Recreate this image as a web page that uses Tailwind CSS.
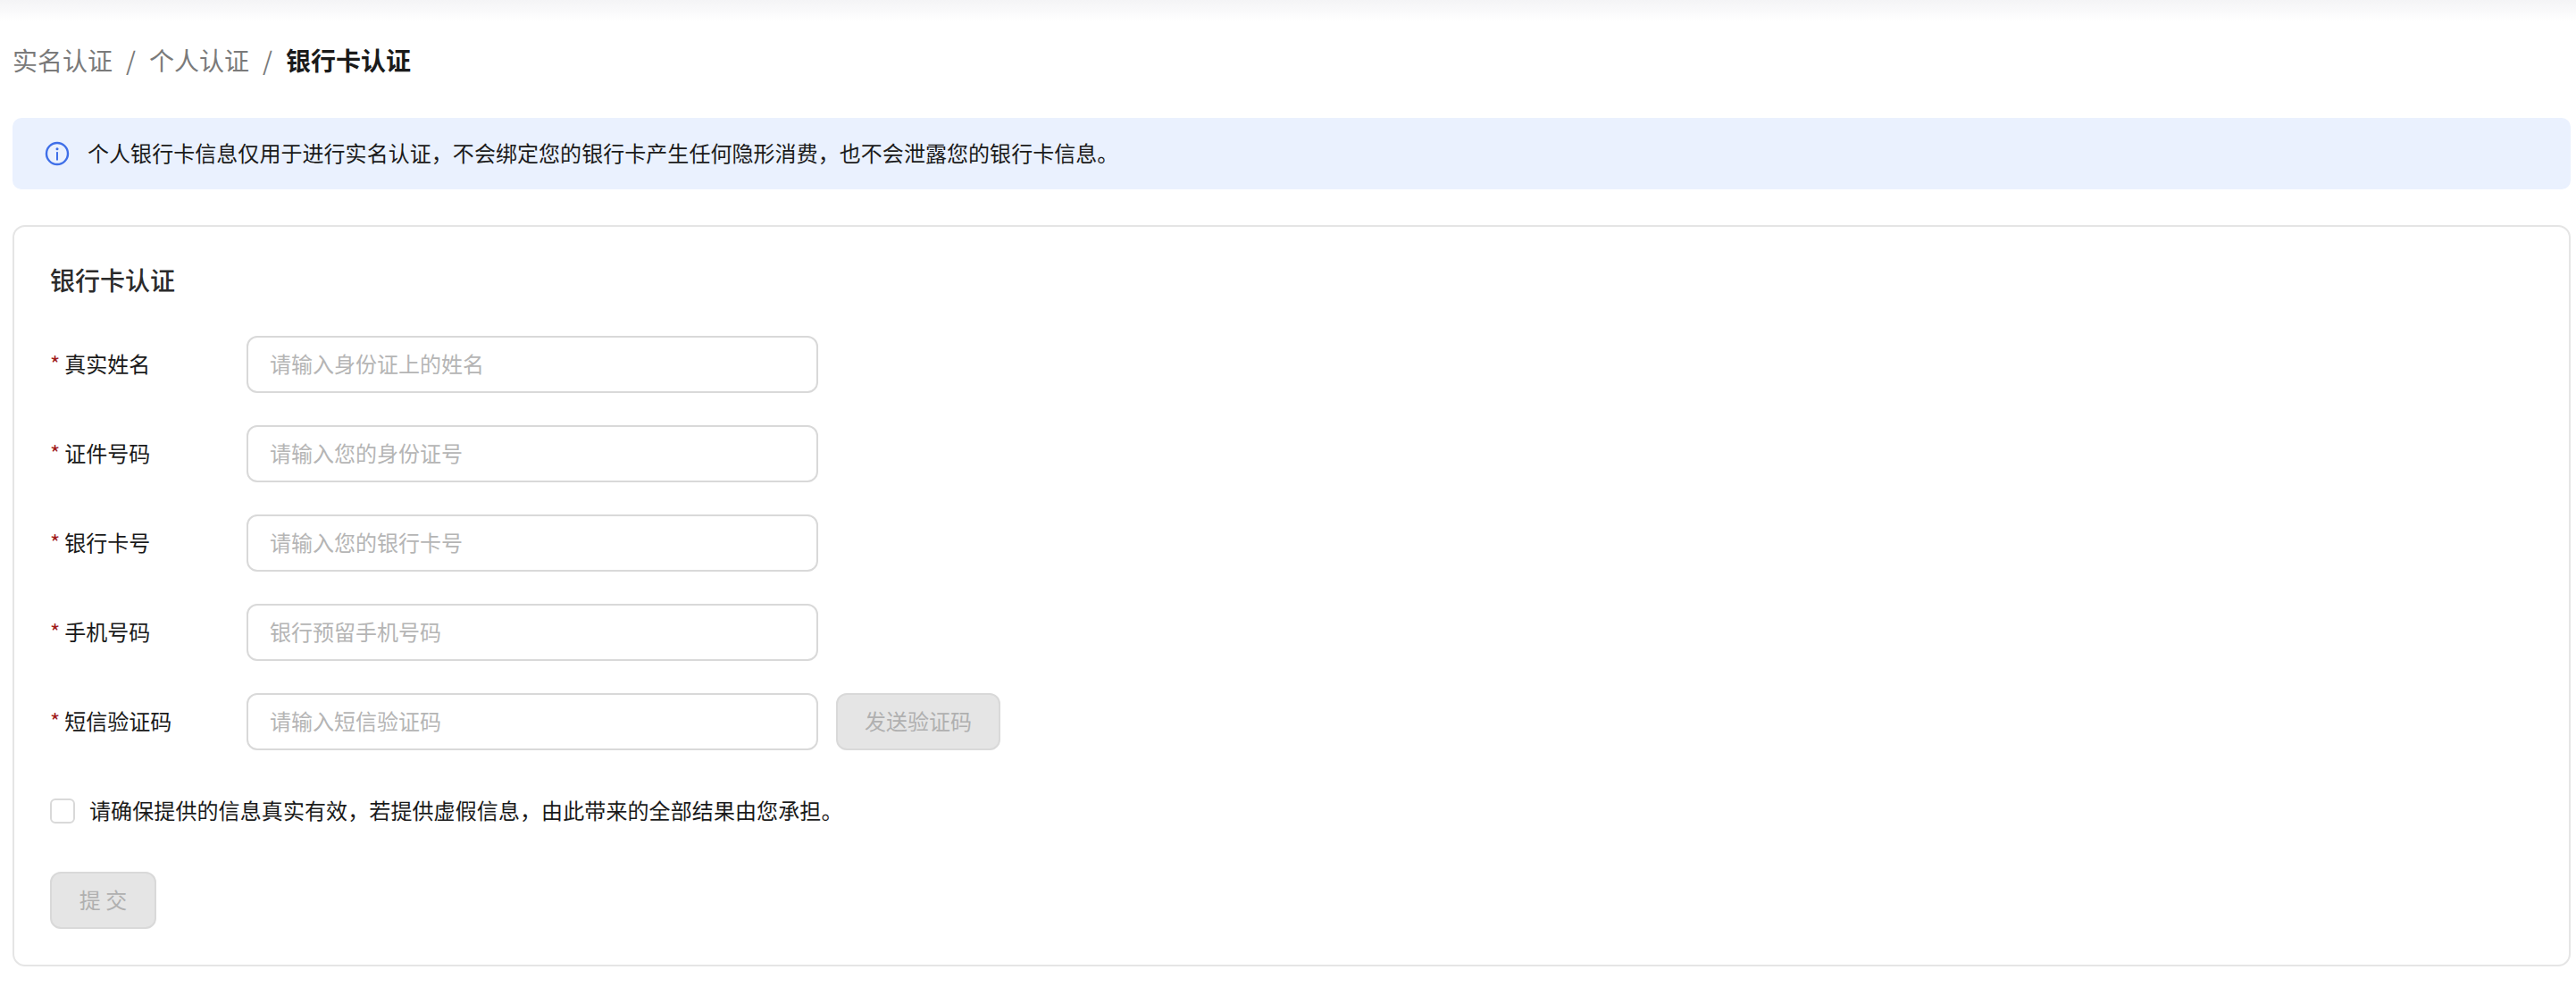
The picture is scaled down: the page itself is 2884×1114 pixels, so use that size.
<!DOCTYPE html>
<html lang="zh-CN">

<head>
    <meta charset="UTF-8">
    <meta name="viewport" content="width=device-width, initial-scale=1.0">
    <title>银行卡认证</title>
    <script src="https://cdn.jsdelivr.net/npm/@tailwindcss/browser@4"></script>
</head>

<body class="bg-white min-h-screen font-['Noto_Sans_CJK_SC',sans-serif] text-[24px] text-[#1a1a1a]">
    <!-- top bar shadow -->
    <div class="h-[24px] bg-gradient-to-b from-[#f4f4f6] to-white"></div>

    <div class="pl-[14px] pr-[6px]">
        <nav class="flex items-center h-[40px] mt-[24px] pb-[3px] text-[28px] leading-[40px]">
            <span class="text-[#7a7a7a]">实名认证</span>
            <span class="text-[#7a7a7a] mx-[15px]">/</span>
            <span class="text-[#7a7a7a]">个人认证</span>
            <span class="text-[#7a7a7a] mx-[15px]">/</span>
            <span class="font-semibold text-[#1a1a1a]">银行卡认证</span>
        </nav>

        <div class="flex items-center h-[80px] mt-[44px] pl-[36px] gap-[20px] rounded-[10px] bg-[#eaf1fe]">
            <svg class="w-[28px] h-[28px] shrink-0" viewBox="0 0 28 28" fill="none">
                <circle cx="14" cy="14" r="12" stroke="#3f6fe8" stroke-width="2.4" />
                <circle cx="14" cy="8.8" r="1.5" fill="#3f6fe8" />
                <rect x="13" y="12" width="2" height="9.5" rx="0.6" fill="#3f6fe8" />
            </svg>
            <p class="pb-[2px] tracking-[0.05px]">个人银行卡信息仅用于进行实名认证，不会绑定您的银行卡产生任何隐形消费，也不会泄露您的银行卡信息。</p>
        </div>

        <div class="mt-[40px] border-2 border-[#e5e5e5] rounded-[14px] pl-[40px] pt-[39px] pb-[40px]">
            <h2 class="text-[28px] leading-[40px] font-medium text-[#2b2b2b] mb-[43px]">银行卡认证</h2>

            <div class="flex flex-col gap-[36px]">
                <div class="flex items-center">
                    <label class="w-[220px] pb-[2px]"><span class="text-[#a11a1a] mr-[5px]">*</span>真实姓名</label>
                    <input class="w-[640px] h-[64px] px-[24px] pb-[3px] border-2 border-[#d9d9d9] rounded-[12px] placeholder:text-[#b5b5b5]" placeholder="请输入身份证上的姓名">
                </div>
                <div class="flex items-center">
                    <label class="w-[220px] pb-[2px]"><span class="text-[#a11a1a] mr-[5px]">*</span>证件号码</label>
                    <input class="w-[640px] h-[64px] px-[24px] pb-[3px] border-2 border-[#d9d9d9] rounded-[12px] placeholder:text-[#b5b5b5]" placeholder="请输入您的身份证号">
                </div>
                <div class="flex items-center">
                    <label class="w-[220px] pb-[2px]"><span class="text-[#a11a1a] mr-[5px]">*</span>银行卡号</label>
                    <input class="w-[640px] h-[64px] px-[24px] pb-[3px] border-2 border-[#d9d9d9] rounded-[12px] placeholder:text-[#b5b5b5]" placeholder="请输入您的银行卡号">
                </div>
                <div class="flex items-center">
                    <label class="w-[220px] pb-[2px]"><span class="text-[#a11a1a] mr-[5px]">*</span>手机号码</label>
                    <input class="w-[640px] h-[64px] px-[24px] pb-[3px] border-2 border-[#d9d9d9] rounded-[12px] placeholder:text-[#b5b5b5]" placeholder="银行预留手机号码">
                </div>
                <div class="flex items-center">
                    <label class="w-[220px] pb-[2px]"><span class="text-[#a11a1a] mr-[5px]">*</span>短信验证码</label>
                    <input class="w-[640px] h-[64px] px-[24px] pb-[3px] border-2 border-[#d9d9d9] rounded-[12px] placeholder:text-[#b5b5b5]" placeholder="请输入短信验证码">
                    <button class="ml-[20px] w-[184px] h-[64px] pb-[3px] border-2 border-[#d9d9d9] rounded-[12px] bg-[#e5e5e5] text-[#b0b0b0]">发送验证码</button>
                </div>
            </div>

            <div class="flex items-center gap-[16px] mt-[54px] h-[28px]">
                <span class="block w-[28px] h-[28px] border-2 border-[#d9d9d9] rounded-[6px]"></span>
                <span class="pb-[2px] tracking-[0.1px]">请确保提供的信息真实有效，若提供虚假信息，由此带来的全部结果由您承担。</span>
            </div>

            <button class="block mt-[54px] w-[119px] h-[64px] pb-[3px] border-2 border-[#d9d9d9] rounded-[12px] bg-[#e5e5e5] text-[#b0b0b0]">提 交</button>
        </div>
    </div>
</body>

</html>
